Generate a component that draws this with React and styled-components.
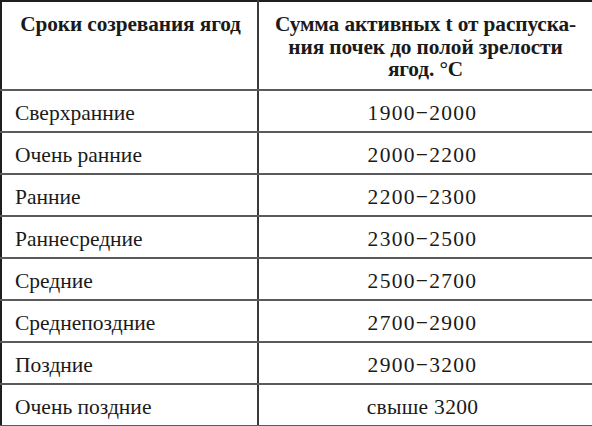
import React from "react";
import styled, { createGlobalStyle } from "styled-components";

const Global = createGlobalStyle`
  html, body { margin: 0; padding: 0; background: #fff; }
  body { width: 592px; height: 426px; overflow: hidden; }
`;

const Table = styled.table`
  width: 592px;
  height: 426px;
  box-sizing: border-box;
  border-collapse: collapse;
  table-layout: fixed;
  border: 2px solid #1e1e1e;
  font-family: "Liberation Serif", "Times New Roman", serif;
  color: #1a1a1a;
`;

const Col = styled.col`
  width: ${(p) => p.$w}px;
`;

const HeadRow = styled.tr`
  height: 89px;
`;

const Row = styled.tr`
  height: 42px;
`;

const HeadCell = styled.th`
  vertical-align: top;
  text-align: center;
  font-weight: bold;
  font-size: 21.3px;
  line-height: 22.5px;
  padding: ${(p) => (p.$left ? "11px 2px 0 4px" : "11px 4px 0 4px")};
  border-right: 2px solid #3a3a3a;
  border-bottom: 2px solid #5a5a5a;
  letter-spacing: -0.1px;
`;

const Cell = styled.td`
  font-size: 21.5px;
  line-height: 24px;
  padding: ${(p) => (p.$center ? "3px 6px 0 0" : "3px 6px 0 13px")};
  text-align: ${(p) => (p.$center ? "center" : "left")};
  vertical-align: middle;
  border-right: 2px solid #3a3a3a;
  border-bottom: 2px solid #5a5a5a;
`;

const Value = styled.span`
  letter-spacing: ${(p) => (p.$range ? "1.3px" : "0.3px")};
`;

const rows = [
  ["Сверхранние", "1900−2000", true],
  ["Очень ранние", "2000−2200", true],
  ["Ранние", "2200−2300", true],
  ["Раннесредние", "2300−2500", true],
  ["Средние", "2500−2700", true],
  ["Среднепоздние", "2700−2900", true],
  ["Поздние", "2900−3200", true],
  ["Очень поздние", "свыше 3200", false],
];

export default function App() {
  return (
    <>
      <Global />
      <Table>
        <colgroup>
          <Col $w={257} />
          <Col $w={335} />
        </colgroup>
        <thead>
          <HeadRow>
            <HeadCell $left>Сроки созревания ягод</HeadCell>
            <HeadCell>
              Сумма активных t от распуска-
              <br />
              ния почек до полой зрелости
              <br />
              ягод. °С
            </HeadCell>
          </HeadRow>
        </thead>
        <tbody>
          {rows.map(([a, b, range]) => (
            <Row key={a}>
              <Cell>{a}</Cell>
              <Cell $center>
                <Value $range={range}>{b}</Value>
              </Cell>
            </Row>
          ))}
        </tbody>
      </Table>
    </>
  );
}
